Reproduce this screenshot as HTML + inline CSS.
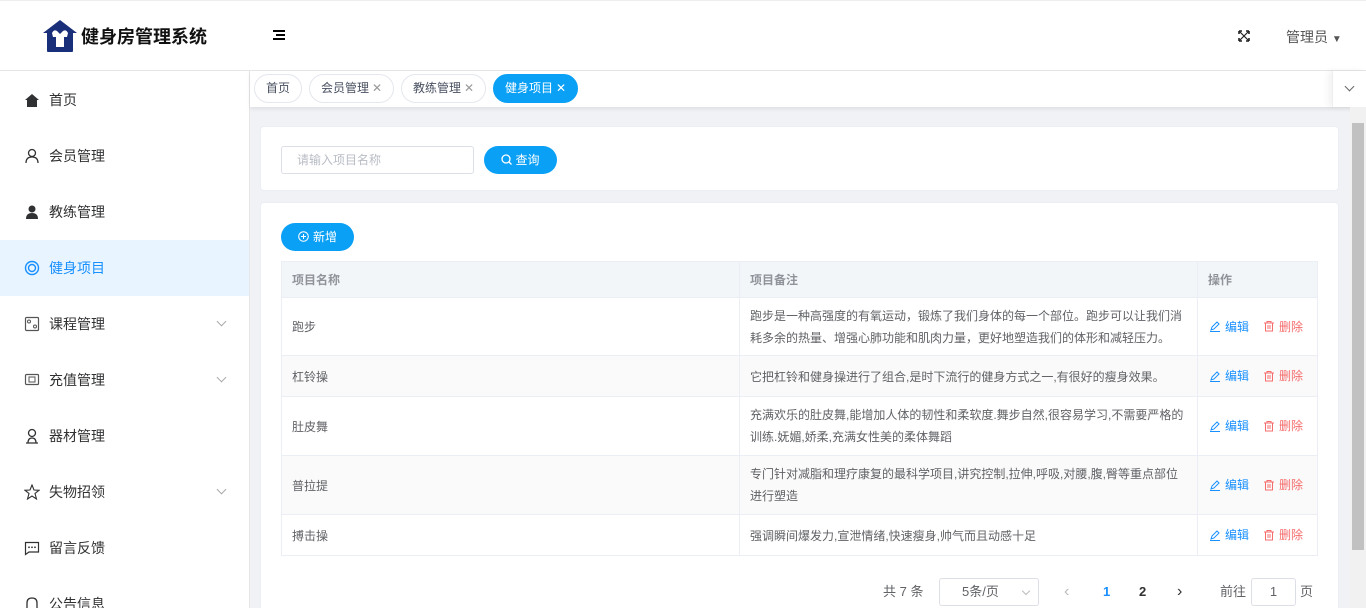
<!DOCTYPE html><html><head><meta charset="utf-8"><style>
*{margin:0;padding:0;box-sizing:border-box}
html{width:1366px;height:608px;overflow:hidden}
body{width:1366px;height:608px;overflow:hidden;font-family:"Liberation Sans","Noto Sans CJK SC",sans-serif;font-size:13px;color:#606266;background:#f0f2f5;position:relative}
.hdr{position:absolute;left:0;top:0;width:1366px;height:71px;background:#fff;border-top:1px solid #eee;border-bottom:1px solid #e6e6e6}
.logo{position:absolute;left:42px;top:18px;display:flex;align-items:center}
.logo b{font-size:18px;color:#111;margin-left:3px;font-weight:bold}
.side{position:absolute;left:0;top:71px;width:250px;height:537px;background:#fff;border-right:1px solid #e6e6e6}
.mi{height:56px;display:flex;align-items:center;padding-left:24px;font-size:14px;color:#303133;position:relative;top:1px}
.mi svg{margin-right:9px}
.mi.act{background:#e8f4ff;color:#1890ff}
.mi .ar{position:absolute;left:218px;top:22px;width:7px;height:7px;border-right:1px solid #aaa;border-bottom:1px solid #aaa;transform:rotate(45deg)}
.tabs{position:absolute;left:250px;top:71px;width:1116px;height:36px;background:#fff;box-shadow:0 2px 4px rgba(0,0,0,.08)}
.tab{position:absolute;top:3px;height:29px;border:1px solid #e4e7ed;border-radius:15px;font-size:12px;color:#495060;line-height:27px;padding:0 11px}
.tab.a{background:#0aa0f5;border-color:#0aa0f5;color:#fff}
.tab i{font-style:normal;margin-left:3px;color:#999}
.tab.a i{color:#fff}
.card{position:absolute;background:#fff;border:1px solid #ebeef5;border-radius:4px}
.btn{position:absolute;background:#0aa0f5;color:#fff;border-radius:14px;height:28px;font-size:12px;line-height:28px;text-align:center}
table{position:absolute;left:281px;top:261px;width:1037px;border-collapse:collapse;font-size:12px;color:#606266;table-layout:fixed}
td,th{border:1px solid #ebeef5;padding:0 10px;text-align:left;vertical-align:middle}
th{height:36px;background:#f3f6f9;color:#909399;font-weight:bold}
tr.z td{background:#fafafa}
td.op{white-space:nowrap;padding:0 0 0 11px}
td.op span{margin-right:14px;display:inline-flex;align-items:center}
td.op svg{margin-right:4px}
.e{color:#1890ff}.d{color:#f56c6c}
.sb{position:absolute;left:1350px;top:107px;width:16px;height:501px;background:#f1f1f1}
.th{position:absolute;left:1352px;top:123px;width:12px;height:427px;background:#c1c1c1}
.pg{position:absolute;top:578px;font-size:13px;color:#606266;line-height:28px}
</style></head><body>
<div class="hdr">
<div class="logo"><svg width="36" height="34" viewBox="0 0 36 34"><path d="M18 1 L35 14 L31 14 L31 32 Q31 33 30 33 L6 33 Q5 33 5 32 L5 14 L1 14 Z" fill="#1a2f7a"/><path d="M10 14 Q12 10 15 12 L18 15 L21 12 Q24 10 26 14 L25 18 L22 18 L22 28 L14 28 L14 18 L11 18 Z" fill="#fff"/></svg><b>健身房管理系统</b></div>
<div style="position:absolute;left:273px;top:29px;width:12px;height:11px"><div style="height:2px;background:#000;margin-bottom:2px"></div><div style="height:2px;background:#000;margin:0 0 2px 3px"></div><div style="height:2px;background:#000"></div></div>
<svg style="position:absolute;left:1238px;top:29px" width="12" height="12" viewBox="0 0 12 12"><path d="M1 1 L11 11 M11 1 L1 11" stroke="#222" stroke-width="1.2"/><path d="M1 1 h3 M1 1 v3 M11 1 h-3 M11 1 v3 M1 11 h3 M1 11 v-3 M11 11 h-3 M11 11 v-3" stroke="#222" stroke-width="1.6"/></svg>
<div style="position:absolute;left:1286px;top:26px;font-size:14px;color:#555">管理员 <span style="font-size:10px">▼</span></div>
</div>
<div class="side">
<div class="mi"><svg width="16" height="16"><path d="M1 8 L8 2 L15 8 L13 8 L13 15 L3 15 L3 8 Z" fill="#303133"/></svg>首页</div>
<div class="mi"><svg width="16" height="16"><circle cx="8" cy="5" r="3.5" fill="none" stroke="#303133" stroke-width="1.3"/><path d="M2 15 Q2 9 8 9 Q14 9 14 15" fill="none" stroke="#303133" stroke-width="1.3"/></svg>会员管理</div>
<div class="mi"><svg width="16" height="16"><circle cx="8" cy="5" r="3.5" fill="#303133"/><path d="M2 15 Q2 9 8 9 Q14 9 14 15Z" fill="#303133"/></svg>教练管理</div>
<div class="mi act"><svg width="16" height="16"><circle cx="8" cy="8" r="6.5" fill="none" stroke="#1890ff" stroke-width="1.4"/><circle cx="8" cy="8" r="3.5" fill="none" stroke="#1890ff" stroke-width="1.4"/></svg>健身项目</div>
<div class="mi"><svg width="16" height="16"><rect x="1.5" y="1.5" width="13" height="13" rx="1" fill="none" stroke="#555" stroke-width="1.2"/><circle cx="5" cy="5.5" r="1.5" fill="none" stroke="#555"/><circle cx="11" cy="10.5" r="1.5" fill="none" stroke="#555"/></svg>课程管理<span class="ar"></span></div>
<div class="mi"><svg width="16" height="16"><rect x="1.5" y="2.5" width="13" height="10" rx="1" fill="none" stroke="#555" stroke-width="1.2"/><rect x="5" y="5" width="6" height="5" fill="none" stroke="#555"/></svg>充值管理<span class="ar"></span></div>
<div class="mi"><svg width="16" height="16"><circle cx="8" cy="5" r="3.5" fill="none" stroke="#303133" stroke-width="1.3"/><path d="M2 15 L14 15 M4 15 Q4 10 8 10 Q12 10 12 15" fill="none" stroke="#303133" stroke-width="1.3"/></svg>器材管理</div>
<div class="mi"><svg width="16" height="16"><path d="M8 1 L10 6 L15 6.3 L11 9.5 L12.5 15 L8 12 L3.5 15 L5 9.5 L1 6.3 L6 6 Z" fill="none" stroke="#303133" stroke-width="1.1"/></svg>失物招领<span class="ar"></span></div>
<div class="mi"><svg width="16" height="16"><path d="M1.5 2.5 H14.5 V12 H5 L1.5 14.5 Z" fill="none" stroke="#303133" stroke-width="1.2"/><circle cx="5" cy="7.3" r=".9" fill="#303133"/><circle cx="8" cy="7.3" r=".9" fill="#303133"/><circle cx="11" cy="7.3" r=".9" fill="#303133"/></svg>留言反馈</div>
<div class="mi"><svg width="16" height="16"><path d="M3 13 V7 Q3 2 8 2 Q13 2 13 7 V13 Z" fill="none" stroke="#303133" stroke-width="1.3"/></svg>公告信息</div>
</div>
<div class="tabs">
<div class="tab" style="left:4px">首页</div>
<div class="tab" style="left:59px">会员管理<i>✕</i></div>
<div class="tab" style="left:151px">教练管理<i>✕</i></div>
<div class="tab a" style="left:243px">健身项目<i>✕</i></div>
<div style="position:absolute;left:1082px;top:0;width:34px;height:36px;border-left:1px solid #eee;box-shadow:-4px 0 6px rgba(0,0,0,.05);background:#fff"><div style="position:absolute;left:13px;top:12px;width:7px;height:7px;border-right:1px solid #666;border-bottom:1px solid #666;transform:rotate(45deg)"></div></div>
</div>
<div class="card" style="left:260px;top:126px;width:1079px;height:65px">
<div style="position:absolute;left:20px;top:19px;width:193px;height:28px;border:1px solid #dcdfe6;border-radius:3px;font-size:12px;color:#b8bcc4;line-height:26px;padding-left:15px">请输入项目名称</div>
<div class="btn" style="left:223px;top:19px;width:73px"><svg width="11" height="11" viewBox="0 0 11 11" style="vertical-align:-1px;margin-right:3px"><circle cx="5" cy="5" r="4" fill="none" stroke="#fff" stroke-width="1.3"/><path d="M8 8 L10.5 10.5" stroke="#fff" stroke-width="1.3"/></svg>查询</div>
</div>
<div class="card" style="left:260px;top:202px;width:1079px;height:420px">
<div class="btn" style="left:20px;top:20px;width:73px"><svg width="11" height="11" viewBox="0 0 11 11" style="vertical-align:-1px;margin-right:4px"><circle cx="5.5" cy="5.5" r="4.8" fill="none" stroke="#fff"/><path d="M5.5 3 V8 M3 5.5 H8" stroke="#fff"/></svg>新增</div>
</div>
<table>
<colgroup><col style="width:458px"><col style="width:458px"><col></colgroup>
<tr><th>项目名称</th><th>项目备注</th><th>操作</th></tr>
<tr style="height:58px"><td>跑步</td><td style="line-height:22px">跑步是一种高强度的有氧运动，锻炼了我们身体的每一个部位。跑步可以让我们消耗多余的热量、增强心肺功能和肌肉力量，更好地塑造我们的体形和减轻压力。</td><td class="op"><span class="e"><svg width="12" height="12"><path d="M2 10 L3 7 L8 2 L10 4 L5 9 Z M1 11.5 H11" fill="none" stroke="#1890ff"/></svg>编辑</span><span class="d"><svg width="12" height="12"><path d="M1 3 H11 M4 3 V1.5 H8 V3 M2.5 3 V11 H9.5 V3 M5 5 V9 M7 5 V9" fill="none" stroke="#f56c6c"/></svg>删除</span></td></tr>
<tr class="z" style="height:41px"><td>杠铃操</td><td>它把杠铃和健身操进行了组合,是时下流行的健身方式之一,有很好的瘦身效果。</td><td class="op"><span class="e"><svg width="12" height="12"><path d="M2 10 L3 7 L8 2 L10 4 L5 9 Z M1 11.5 H11" fill="none" stroke="#1890ff"/></svg>编辑</span><span class="d"><svg width="12" height="12"><path d="M1 3 H11 M4 3 V1.5 H8 V3 M2.5 3 V11 H9.5 V3 M5 5 V9 M7 5 V9" fill="none" stroke="#f56c6c"/></svg>删除</span></td></tr>
<tr style="height:59px"><td>肚皮舞</td><td style="line-height:22px">充满欢乐的肚皮舞,能增加人体的韧性和柔软度.舞步自然,很容易学习,不需要严格的训练.妩媚,娇柔,充满女性美的柔体舞蹈</td><td class="op"><span class="e"><svg width="12" height="12"><path d="M2 10 L3 7 L8 2 L10 4 L5 9 Z M1 11.5 H11" fill="none" stroke="#1890ff"/></svg>编辑</span><span class="d"><svg width="12" height="12"><path d="M1 3 H11 M4 3 V1.5 H8 V3 M2.5 3 V11 H9.5 V3 M5 5 V9 M7 5 V9" fill="none" stroke="#f56c6c"/></svg>删除</span></td></tr>
<tr class="z" style="height:59px"><td>普拉提</td><td style="line-height:22px">专门针对减脂和理疗康复的最科学项目,讲究控制,拉伸,呼吸,对腰,腹,臀等重点部位进行塑造</td><td class="op"><span class="e"><svg width="12" height="12"><path d="M2 10 L3 7 L8 2 L10 4 L5 9 Z M1 11.5 H11" fill="none" stroke="#1890ff"/></svg>编辑</span><span class="d"><svg width="12" height="12"><path d="M1 3 H11 M4 3 V1.5 H8 V3 M2.5 3 V11 H9.5 V3 M5 5 V9 M7 5 V9" fill="none" stroke="#f56c6c"/></svg>删除</span></td></tr>
<tr style="height:41px"><td>搏击操</td><td>强调瞬间爆发力,宣泄情绪,快速瘦身,帅气而且动感十足</td><td class="op"><span class="e"><svg width="12" height="12"><path d="M2 10 L3 7 L8 2 L10 4 L5 9 Z M1 11.5 H11" fill="none" stroke="#1890ff"/></svg>编辑</span><span class="d"><svg width="12" height="12"><path d="M1 3 H11 M4 3 V1.5 H8 V3 M2.5 3 V11 H9.5 V3 M5 5 V9 M7 5 V9" fill="none" stroke="#f56c6c"/></svg>删除</span></td></tr>
</table>
<div class="pg" style="left:883px">共 7 条</div>
<div style="position:absolute;left:939px;top:578px;width:100px;height:28px;border:1px solid #dcdfe6;border-radius:3px;font-size:13px;line-height:26px;padding-left:22px">5条/页<span style="position:absolute;right:9px;top:9px;width:6px;height:6px;border-right:1px solid #bbb;border-bottom:1px solid #bbb;transform:rotate(45deg)"></span></div>
<div class="pg" style="left:1064px;color:#bbb;font-size:16px">‹</div>
<div class="pg" style="left:1103px;color:#1890ff;font-weight:bold">1</div>
<div class="pg" style="left:1139px;color:#303133;font-weight:bold">2</div>
<div class="pg" style="left:1177px;color:#303133;font-size:16px">›</div>
<div class="pg" style="left:1220px">前往</div>
<div style="position:absolute;left:1251px;top:578px;width:45px;height:28px;border:1px solid #dcdfe6;border-radius:3px;text-align:center;line-height:26px">1</div>
<div class="pg" style="left:1300px">页</div>
<div class="sb"></div><div class="th"></div>
</body></html>
